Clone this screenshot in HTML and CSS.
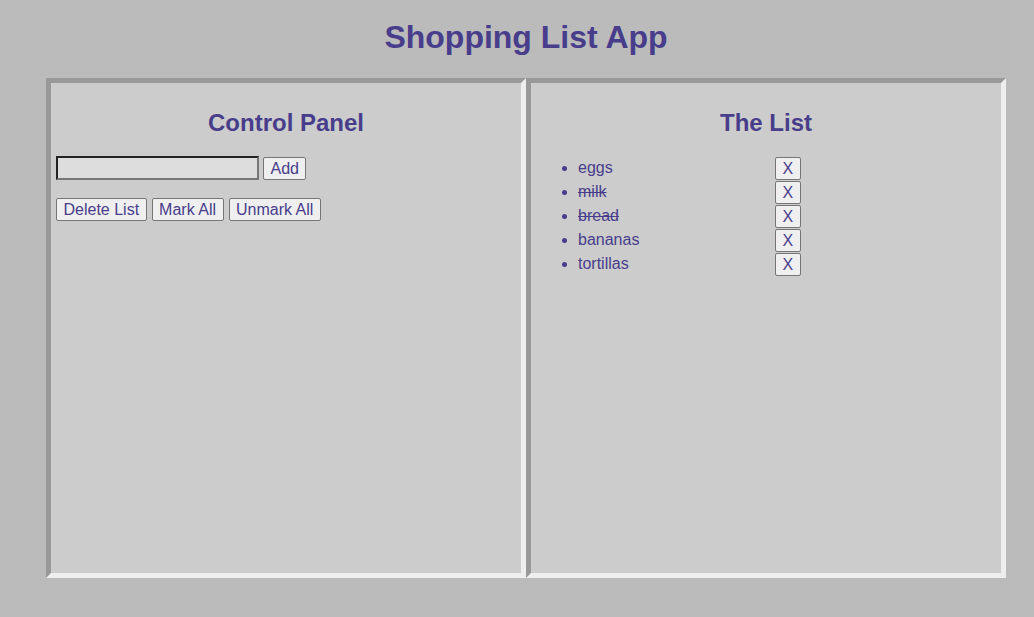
FILE: index.html
```html
<!DOCTYPE html>
<html>
<head>
<meta charset="utf-8">
<title>Shopping List App</title>
<link rel="stylesheet" href="styles.css">
</head>
<body>
<div class="app">
  <h1 class="title">Shopping List App</h1>
  <div class="panels">
    <section class="panel">
      <h2 class="panel-title">Control Panel</h2>
      <div class="add-row">
        <input class="item-input" type="text">
        <button class="btn">Add</button>
      </div>
      <div class="action-row">
        <button class="btn">Delete List</button>
        <button class="btn">Mark All</button>
        <button class="btn">Unmark All</button>
      </div>
    </section>
    <section class="panel">
      <h2 class="panel-title">The List</h2>
      <ul class="list">
        <li class="item"><span class="item-name">eggs</span><button class="btn btn-x">X</button></li>
        <li class="item"><span class="item-name done">milk</span><button class="btn btn-x">X</button></li>
        <li class="item"><span class="item-name done">bread</span><button class="btn btn-x">X</button></li>
        <li class="item"><span class="item-name">bananas</span><button class="btn btn-x">X</button></li>
        <li class="item"><span class="item-name">tortillas</span><button class="btn btn-x">X</button></li>
      </ul>
    </section>
  </div>
</div>
</body>
</html>
```

FILE: styles.css
```css
html, body {
  margin: 0;
  padding: 0;
}

body {
  background: #bbbbbb;
  color: #483d8b;
  font-family: "Liberation Sans", Arial, sans-serif;
  font-size: 16px;
}

.app {
  width: 960px;
  margin-left: 46px;
  padding-top: 19px;
}

.title {
  margin: 0 0 22px;
  font-size: 32px;
  line-height: 37px;
  font-weight: bold;
  text-align: center;
}

.panels {
  display: flex;
}

.panel {
  box-sizing: border-box;
  width: 480px;
  height: 500px;
  padding: 5px;
  background: #cccccc;
  border: 5px solid;
  border-color: #999999 #eeeeee #eeeeee #999999;
}

.panel-title {
  margin: 21px 0 20px;
  font-size: 24px;
  line-height: 27px;
  font-weight: bold;
  text-align: center;
}

.add-row {
  display: flex;
  align-items: flex-end;
  gap: 4px;
}

.item-input {
  box-sizing: border-box;
  width: 203px;
  height: 24px;
  margin: 0;
  padding: 1px 2px;
  background: #dddddd;
  border: 2px solid;
  border-color: #222222 #767676 #767676 #222222;
  font-family: inherit;
  font-size: 16px;
}

.action-row {
  display: flex;
  gap: 5px;
  margin-top: 18px;
}

.btn {
  box-sizing: border-box;
  height: 23px;
  margin: 0;
  padding: 1px 6.5px;
  background: #efefef;
  border: 1px solid #767676;
  border-radius: 2px;
  color: #483d8b;
  font-family: "Liberation Sans", Arial, sans-serif;
  font-size: 16px;
  line-height: 19px;
}

.list {
  margin: 0;
  padding-left: 42px;
}

.item {
  height: 24px;
  line-height: 24px;
}

.item-name {
  display: inline-block;
  width: 197px;
  vertical-align: top;
}

.done {
  text-decoration: line-through;
}

.btn-x {
  vertical-align: top;
  margin-top: 1px;
}
```
